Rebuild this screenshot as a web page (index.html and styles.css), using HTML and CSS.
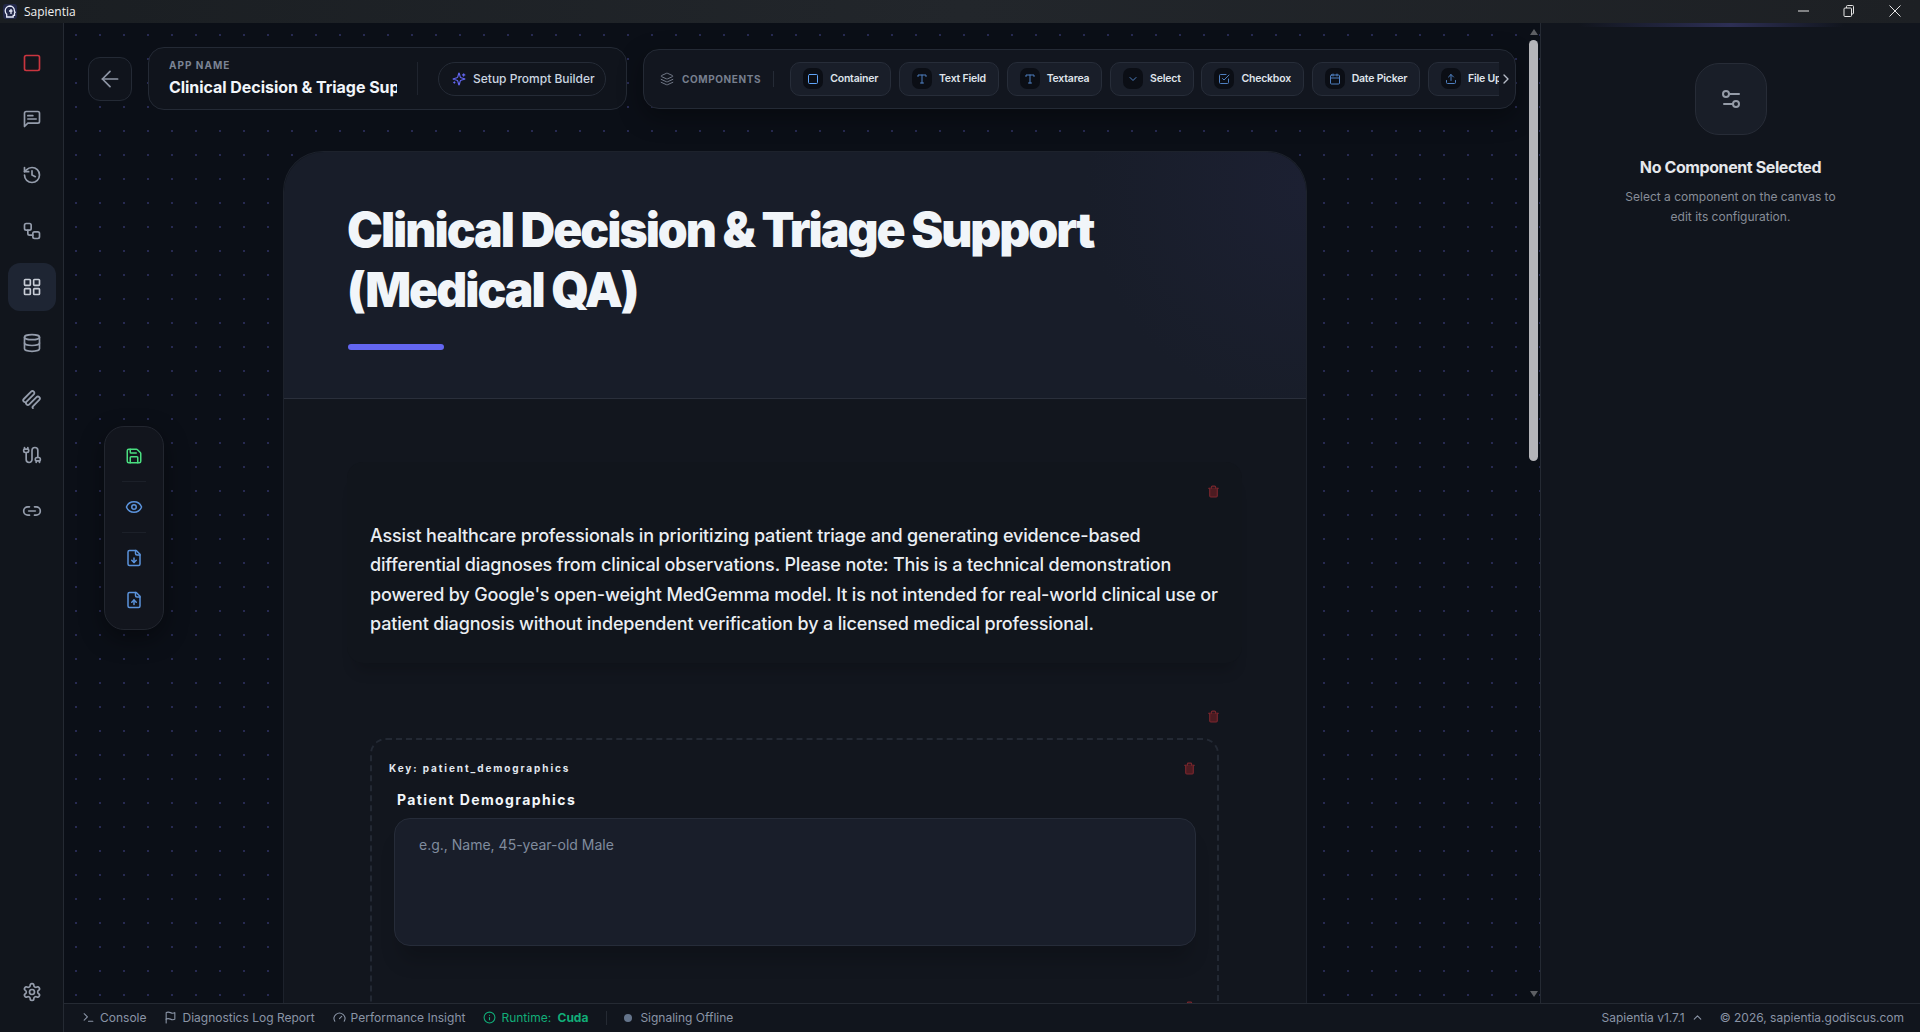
FILE: index.html
```html
<!DOCTYPE html>
<html lang="en">
<head>
    <meta charset="UTF-8">
    <title>Sapientia</title>
    <link rel="stylesheet" href="styles.css">
</head>
<body>
    <svg class="sprite" xmlns="http://www.w3.org/2000/svg">
        <symbol id="i-square" viewBox="0 0 24 24"><rect x="3" y="3" width="18" height="18" rx="2"/></symbol>
        <symbol id="i-chat" viewBox="0 0 24 24"><path d="M21 15a2 2 0 0 1-2 2H7l-4 4V5a2 2 0 0 1 2-2h14a2 2 0 0 1 2 2z"/><path d="M13 8H7"/><path d="M17 12H7"/></symbol>
        <symbol id="i-history" viewBox="0 0 24 24"><path d="M3 12a9 9 0 1 0 9-9 9.75 9.75 0 0 0-6.74 2.74L3 8"/><path d="M3 3v5h5"/><path d="M12 7v5l4 2"/></symbol>
        <symbol id="i-workflow" viewBox="0 0 24 24"><rect x="3" y="3" width="8" height="8" rx="2"/><path d="M7 11v4a2 2 0 0 0 2 2h4"/><rect x="13" y="13" width="8" height="8" rx="2"/></symbol>
        <symbol id="i-grid" viewBox="0 0 24 24"><rect x="3" y="3" width="7" height="7" rx="1"/><rect x="14" y="3" width="7" height="7" rx="1"/><rect x="14" y="14" width="7" height="7" rx="1"/><rect x="3" y="14" width="7" height="7" rx="1"/></symbol>
        <symbol id="i-database" viewBox="0 0 24 24"><ellipse cx="12" cy="5" rx="9" ry="3"/><path d="M3 5V19A9 3 0 0 0 21 19V5"/><path d="M3 12A9 3 0 0 0 21 12"/></symbol>
        <symbol id="i-coil" viewBox="1 2 22 22"><path d="M6 16a2.100 2.100 0 0 1-3-3L11 5a2.100 2.100 0 0 1 3 3L6 16a2.100 2.100 0 0 0 3 3l8-8a2.100 2.100 0 0 1 3 3l-7 7q-1 1 0 2"/></symbol>
        <symbol id="i-cable" viewBox="0 0 24 24"><path d="M17 21v-2a1 1 0 0 1-1-1v-1a2 2 0 0 1 2-2h2a2 2 0 0 1 2 2v1a1 1 0 0 1-1 1"/><path d="M19 15V6.5a1 1 0 0 0-7 0v11a1 1 0 0 1-7 0V9"/><path d="M21 21v-2h-4"/><path d="M3 5h4V3"/><path d="M7 5a1 1 0 0 1 1 1v1a2 2 0 0 1-2 2H4a2 2 0 0 1-2-2V6a1 1 0 0 1 1-1V3"/></symbol>
        <symbol id="i-link" viewBox="0 0 24 24"><path d="M9 17H7A5 5 0 0 1 7 7h2"/><path d="M15 7h2a5 5 0 1 1 0 10h-2"/><path d="M8 12h8"/></symbol>
        <symbol id="i-settings" viewBox="0 0 24 24"><path d="M12.22 2h-.44a2 2 0 0 0-2 2v.18a2 2 0 0 1-1 1.73l-.43.25a2 2 0 0 1-2 0l-.15-.08a2 2 0 0 0-2.73.73l-.22.38a2 2 0 0 0 .73 2.73l.15.1a2 2 0 0 1 1 1.72v.51a2 2 0 0 1-1 1.74l-.15.09a2 2 0 0 0-.73 2.73l.22.38a2 2 0 0 0 2.73.73l.15-.08a2 2 0 0 1 2 0l.43.25a2 2 0 0 1 1 1.73V20a2 2 0 0 0 2 2h.44a2 2 0 0 0 2-2v-.18a2 2 0 0 1 1-1.73l.43-.25a2 2 0 0 1 2 0l.15.08a2 2 0 0 0 2.73-.73l.22-.39a2 2 0 0 0-.73-2.73l-.15-.08a2 2 0 0 1-1-1.74v-.5a2 2 0 0 1 1-1.74l.15-.09a2 2 0 0 0 .73-2.73l-.22-.38a2 2 0 0 0-2.73-.73l-.15.08a2 2 0 0 1-2 0l-.43-.25a2 2 0 0 1-1-1.73V4a2 2 0 0 0-2-2z"/><circle cx="12" cy="12" r="3"/></symbol>
        <symbol id="i-back" viewBox="0 0 24 24"><path d="m12 19-7-7 7-7"/><path d="M19 12H5"/></symbol>
        <symbol id="i-sparkles" viewBox="0 0 24 24"><path d="M9.937 15.5A2 2 0 0 0 8.5 14.063l-6.135-1.582a.5.5 0 0 1 0-.962L8.5 9.936A2 2 0 0 0 9.937 8.5l1.582-6.135a.5.5 0 0 1 .963 0L14.063 8.5A2 2 0 0 0 15.5 9.937l6.135 1.581a.5.5 0 0 1 0 .964L15.5 14.063a2 2 0 0 0-1.437 1.437l-1.582 6.135a.5.5 0 0 1-.963 0z"/><path d="M20 3v4"/><path d="M22 5h-4"/><path d="M4 17v2"/><path d="M5 18H3"/></symbol>
        <symbol id="i-layers" viewBox="0 0 24 24"><path d="m12.83 2.18a2 2 0 0 0-1.66 0L2.6 6.08a1 1 0 0 0 0 1.83l8.58 3.91a2 2 0 0 0 1.66 0l8.58-3.9a1 1 0 0 0 0-1.83Z"/><path d="m22 17.65-9.17 4.16a2 2 0 0 1-1.66 0L2 17.65"/><path d="m22 12.65-9.17 4.16a2 2 0 0 1-1.66 0L2 12.65"/></symbol>
        <symbol id="i-type" viewBox="0 0 24 24"><path d="M4 7V4h16v3"/><path d="M9 20h6"/><path d="M12 4v16"/></symbol>
        <symbol id="i-chevron-down" viewBox="0 0 24 24"><path d="m6 9 6 6 6-6"/></symbol>
        <symbol id="i-chevron-right" viewBox="0 0 24 24"><path d="m9 18 6-6-6-6"/></symbol>
        <symbol id="i-chevron-up" viewBox="0 0 24 24"><path d="m18 15-6-6-6 6"/></symbol>
        <symbol id="i-check" viewBox="0 0 24 24"><path d="M9 11l3 3L22 4"/><path d="M21 12v7a2 2 0 0 1-2 2H5a2 2 0 0 1-2-2V5a2 2 0 0 1 2-2h11"/></symbol>
        <symbol id="i-calendar" viewBox="0 0 24 24"><path d="M8 2v4"/><path d="M16 2v4"/><rect x="3" y="4" width="18" height="18" rx="2"/><path d="M3 10h18"/></symbol>
        <symbol id="i-upload" viewBox="0 0 24 24"><path d="M21 15v4a2 2 0 0 1-2 2H5a2 2 0 0 1-2-2v-4"/><path d="M17 8l-5-5-5 5"/><path d="M12 3v12"/></symbol>
        <symbol id="i-sliders" viewBox="0 0 24 24"><path d="M20 7h-9"/><path d="M14 17H5"/><circle cx="17" cy="17" r="3"/><circle cx="7" cy="7" r="3"/></symbol>
        <symbol id="i-save" viewBox="0 0 24 24"><path d="M15.2 3a2 2 0 0 1 1.4.6l3.8 3.8a2 2 0 0 1 .6 1.4V19a2 2 0 0 1-2 2H5a2 2 0 0 1-2-2V5a2 2 0 0 1 2-2z"/><path d="M17 21v-7a1 1 0 0 0-1-1H8a1 1 0 0 0-1 1v7"/><path d="M7 3v4a1 1 0 0 0 1 1h7"/></symbol>
        <symbol id="i-eye" viewBox="0 0 24 24"><path d="M2.062 12.348a1 1 0 0 1 0-.696 10.75 10.75 0 0 1 19.876 0 1 1 0 0 1 0 .696 10.75 10.75 0 0 1-19.876 0"/><circle cx="12" cy="12" r="3"/></symbol>
        <symbol id="i-file-down" viewBox="0 0 24 24"><path d="M15 2H6a2 2 0 0 0-2 2v16a2 2 0 0 0 2 2h12a2 2 0 0 0 2-2V7Z"/><path d="M14 2v4a2 2 0 0 0 2 2h4"/><path d="M12 18v-6"/><path d="m9 15 3 3 3-3"/></symbol>
        <symbol id="i-file-up" viewBox="0 0 24 24"><path d="M15 2H6a2 2 0 0 0-2 2v16a2 2 0 0 0 2 2h12a2 2 0 0 0 2-2V7Z"/><path d="M14 2v4a2 2 0 0 0 2 2h4"/><path d="M12 12v6"/><path d="m15 15-3-3-3 3"/></symbol>
        <symbol id="i-trash" viewBox="0 0 24 24"><path d="M3 6h18"/><path class="trash-body" d="M19 6v14c0 1-1 2-2 2H7c-1 0-2-1-2-2V6"/><path d="M8 6V4c0-1 1-2 2-2h4c1 0 2 1 2 2v2"/></symbol>
        <symbol id="i-terminal" viewBox="0 0 24 24"><path d="M4 17l6-6-6-6"/><path d="M12 19h8"/></symbol>
        <symbol id="i-flag" viewBox="0 0 24 24"><path d="M4 15s1-1 4-1 5 2 8 2 4-1 4-1V3s-1 1-4 1-5-2-8-2-4 1-4 1z"/><path d="M4 22v-7"/></symbol>
        <symbol id="i-gauge" viewBox="0 0 24 24"><path d="m12 14 4-4"/><path d="M3.34 19a10 10 0 1 1 17.32 0"/></symbol>
        <symbol id="i-info" viewBox="0 0 24 24"><circle cx="12" cy="12" r="10"/><path d="M12 16v-4"/><path d="M12 8h.01"/></symbol>
    </svg>

    <div class="app">
        <header class="titlebar">
            <span class="app-logo">
                <svg viewBox="0 0 14 14"><path d="M7 1.500a4.800 4.800 0 0 0-4.800 4.800c0 1.700.8 2.800 1.500 3.500v2.700h6.500v-1.700h1.300V8.500l.6-.4-.7-1.800A4.700 4.700 0 0 0 7 1.500z"/><path d="M8 4.500v5M6 6.500h3.500"/></svg>
            </span>
            <span class="app-title">Sapientia</span>
            <div class="window-controls">
                <svg class="win-min" viewBox="0 0 12 12"><path d="M0 6h11"/></svg>
                <svg class="win-max" viewBox="0 0 12 12"><rect x="1" y="3" width="7.500" height="8.500" rx="1"/><path d="M3.500 3V1.500a1 1 0 0 1 1-1h5a1 1 0 0 1 1 1v6.500a1 1 0 0 1-1 1h-1"/></svg>
                <svg class="win-close" viewBox="0 0 12 12"><path d="M.5.500l11 11M11.500.500l-11 11"/></svg>
            </div>
        </header>

        <div class="workspace">
            <nav class="sidebar">
                <a class="nav-item nav-red"><svg class="icon"><use href="#i-square"/></svg></a>
                <a class="nav-item"><svg class="icon"><use href="#i-chat"/></svg></a>
                <a class="nav-item"><svg class="icon"><use href="#i-history"/></svg></a>
                <a class="nav-item"><svg class="icon"><use href="#i-workflow"/></svg></a>
                <a class="nav-item active"><svg class="icon"><use href="#i-grid"/></svg></a>
                <a class="nav-item"><svg class="icon"><use href="#i-database"/></svg></a>
                <a class="nav-item"><svg class="icon"><use href="#i-coil"/></svg></a>
                <a class="nav-item"><svg class="icon"><use href="#i-cable"/></svg></a>
                <a class="nav-item"><svg class="icon"><use href="#i-link"/></svg></a>
                <a class="nav-item nav-bottom"><svg class="icon"><use href="#i-settings"/></svg></a>
            </nav>

            <div class="main">
                <div class="panes">
                    <section class="canvas">
                        <div class="canvas-view">
                            <div class="toolbar-row">
                                <button class="back-btn"><svg class="icon"><use href="#i-back"/></svg></button>
                                <div class="name-card">
                                    <div class="name-field">
                                        <span class="name-label">APP NAME</span>
                                        <span class="name-value">Clinical Decision &amp; Triage Support (Medical QA)</span>
                                    </div>
                                    <span class="name-sep"></span>
                                    <button class="prompt-btn"><svg class="icon"><use href="#i-sparkles"/></svg>Setup Prompt Builder</button>
                                </div>
                                <div class="components-bar">
                                    <div class="components-head">
                                        <svg class="icon"><use href="#i-layers"/></svg>
                                        <span>COMPONENTS</span>
                                    </div>
                                    <span class="components-sep"></span>
                                    <div class="components-list">
                                        <button class="comp-btn"><span class="comp-icon bright"><svg class="icon"><use href="#i-square"/></svg></span>Container</button>
                                        <button class="comp-btn"><span class="comp-icon"><svg class="icon"><use href="#i-type"/></svg></span>Text Field</button>
                                        <button class="comp-btn"><span class="comp-icon"><svg class="icon"><use href="#i-type"/></svg></span>Textarea</button>
                                        <button class="comp-btn"><span class="comp-icon"><svg class="icon"><use href="#i-chevron-down"/></svg></span>Select</button>
                                        <button class="comp-btn"><span class="comp-icon"><svg class="icon"><use href="#i-check"/></svg></span>Checkbox</button>
                                        <button class="comp-btn"><span class="comp-icon"><svg class="icon"><use href="#i-calendar"/></svg></span>Date Picker</button>
                                        <button class="comp-btn"><span class="comp-icon"><svg class="icon"><use href="#i-upload"/></svg></span>File Upload</button>
                                    </div>
                                    <svg class="icon components-more"><use href="#i-chevron-right"/></svg>
                                </div>
                            </div>

                            <article class="page-card">
                                <div class="page-header">
                                    <h1>Clinical Decision &amp; Triage Support (Medical QA)</h1>
                                    <div class="accent-bar"></div>
                                </div>
                                <div class="page-body">
                                    <div class="block block-text">
                                        <svg class="icon trash"><use href="#i-trash"/></svg>
                                        <p>Assist healthcare professionals in prioritizing patient triage and generating evidence-based differential diagnoses from clinical observations. Please note: This is a technical demonstration powered by Google's open-weight MedGemma model. It is not intended for real-world clinical use or patient diagnosis without independent verification by a licensed medical professional.</p>
                                    </div>
                                    <div class="block block-group">
                                        <svg class="icon trash"><use href="#i-trash"/></svg>
                                        <div class="group">
                                            <div class="field">
                                                <svg class="icon trash"><use href="#i-trash"/></svg>
                                                <div class="field-key">Key: patient_demographics</div>
                                                <label class="field-label">Patient Demographics</label>
                                                <div class="textarea">e.g., Name, 45-year-old Male</div>
                                            </div>
                                            <div class="field field-next">
                                                <svg class="icon trash"><use href="#i-trash"/></svg>
                                            </div>
                                        </div>
                                    </div>
                                </div>
                            </article>

                            <div class="float-tools">
                                <button class="tool green"><svg class="icon"><use href="#i-save"/></svg></button>
                                <span class="tool-sep"></span>
                                <button class="tool"><svg class="icon"><use href="#i-eye"/></svg></button>
                                <span class="tool-sep"></span>
                                <button class="tool"><svg class="icon"><use href="#i-file-down"/></svg></button>
                                <button class="tool"><svg class="icon"><use href="#i-file-up"/></svg></button>
                            </div>
                        </div>
                        <div class="scrollbar">
                            <span class="arrow-up"></span>
                            <div class="scroll-track"><div class="scroll-thumb"></div></div>
                            <span class="arrow-down"></span>
                        </div>
                    </section>

                    <aside class="inspector">
                        <div class="inspector-glow"></div>
                        <div class="inspector-icon"><svg class="icon"><use href="#i-sliders"/></svg></div>
                        <h3>No Component Selected</h3>
                        <p>Select a component on the canvas to<br>edit its configuration.</p>
                    </aside>
                </div>

                <footer class="statusbar">
                    <span class="status-item"><svg class="icon"><use href="#i-terminal"/></svg>Console</span>
                    <span class="status-item"><svg class="icon"><use href="#i-flag"/></svg>Diagnostics Log Report</span>
                    <span class="status-item"><svg class="icon"><use href="#i-gauge"/></svg>Performance Insight</span>
                    <span class="status-item runtime"><svg class="icon"><use href="#i-info"/></svg>Runtime: <b>Cuda</b></span>
                    <span class="status-sep"></span>
                    <span class="status-item signal"><span class="status-dot"></span>Signaling Offline</span>
                    <span class="status-right">Sapientia v1.7.1<svg class="icon"><use href="#i-chevron-up"/></svg></span>
                    <span class="status-copy">© 2026, sapientia.godiscus.com</span>
                </footer>
            </div>
        </div>
    </div>
</body>
</html>
```

FILE: styles.css
```css
* {
    box-sizing: border-box;
}
html, body {
    height: 100%;
    margin: 0;
}
body {
    font-family: 'Inter', 'Liberation Sans', sans-serif;
    background: #0b0f17;
    color: #e5e7eb;
    overflow: hidden;
}
button {
    font-family: inherit;
    cursor: pointer;
}
.sprite {
    display: none;
}
.icon {
    fill: none;
    stroke: currentColor;
    stroke-width: 2;
    stroke-linecap: round;
    stroke-linejoin: round;
    flex-shrink: 0;
}
.app {
    display: flex;
    flex-direction: column;
    height: 100vh;
}

/* title bar */
.titlebar {
    display: flex;
    align-items: center;
    height: 23px;
    flex-shrink: 0;
    padding-left: 3px;
    background: linear-gradient(to right, #1a1e22, #22262b 50%, #1d2024);
}
.app-logo {
    display: flex;
    width: 14px;
    height: 15px;
    margin-right: 7px;
    background: #23294a;
    border-radius: 3px;
}
.app-logo svg {
    fill: none;
    stroke: #e6eafa;
    stroke-width: 1.300;
}
.app-title {
    font-family: 'Open Sans', sans-serif;
    font-size: 12px;
    color: #f0f0f0;
}
.window-controls {
    display: flex;
    align-items: center;
    margin-left: auto;
    height: 100%;
}
.window-controls svg {
    fill: none;
    stroke: #e4e4e4;
    stroke-width: 1;
    width: 12px;
    height: 12px;
    margin-bottom: 2px;
}
.win-min {
    margin-right: 33px;
}
.win-max {
    margin-right: 34px;
}
.win-close {
    margin-right: 19px;
}

.workspace {
    display: flex;
    flex: 1;
    min-height: 0;
}

/* left nav */
.sidebar {
    display: flex;
    flex-direction: column;
    align-items: center;
    width: 64px;
    flex-shrink: 0;
    padding-top: 16px;
    background: #11151c;
    border-right: 1px solid #252a33;
}
.nav-item {
    display: flex;
    align-items: center;
    justify-content: center;
    width: 48px;
    height: 48px;
    margin-bottom: 8px;
    border-radius: 12px;
    color: #959dac;
}
.nav-item .icon {
    width: 20px;
    height: 20px;
}
.nav-item.active {
    background: #1e2533;
    color: #c8cdd6;
}
.nav-red {
    color: #c9353f;
}
.nav-bottom {
    margin-top: auto;
    margin-bottom: 16px;
}

.main {
    display: flex;
    flex-direction: column;
    flex: 1;
    min-width: 0;
}
.panes {
    display: flex;
    flex: 1;
    min-height: 0;
}

/* canvas */
.canvas {
    display: flex;
    flex: 1;
    min-width: 0;
    background-color: #0b0f17;
    background-image: radial-gradient(circle, #272a52 1px, transparent 1.2px);
    background-size: 24px 24px;
}
.canvas-view {
    position: relative;
    flex: 1;
    min-width: 0;
    overflow: hidden;
}
.toolbar-row {
    display: flex;
    align-items: center;
    gap: 16px;
    padding: 24px 11px 0 24px;
}
.back-btn {
    display: flex;
    align-items: center;
    justify-content: center;
    width: 44px;
    height: 44px;
    flex-shrink: 0;
    background: #10141c;
    border: 1px solid #242a35;
    border-radius: 12px;
    color: #8e96a5;
}
.back-btn .icon {
    width: 26px;
    height: 26px;
    stroke-width: 1.600;
}
.name-card {
    display: flex;
    align-items: center;
    width: 479px;
    height: 63px;
    flex-shrink: 0;
    padding: 0 20px;
    background: #10141c;
    border: 1px solid #242a35;
    border-radius: 16px;
}
.name-field {
    display: flex;
    flex-direction: column;
    width: 228px;
    flex-shrink: 0;
    padding-bottom: 2px;
    overflow: hidden;
}
.name-label {
    font-size: 10px;
    font-weight: 700;
    letter-spacing: 1px;
    color: #7b8494;
}
.name-value {
    margin-top: 6px;
    font-size: 16px;
    font-weight: 700;
    letter-spacing: -0.05px;
    color: #f1f5f9;
    white-space: nowrap;
    overflow: hidden;
}
.name-sep {
    width: 1px;
    height: 33px;
    margin: 0 20px;
    flex-shrink: 0;
    background: #1f242e;
}
.prompt-btn {
    display: flex;
    align-items: center;
    gap: 7px;
    height: 34px;
    flex-shrink: 0;
    padding: 0 10px 0 13px;
    background: #11151d;
    border: 1px solid #252b36;
    border-radius: 17px;
    font-size: 12px;
    font-weight: 500;
    color: #cbd5e1;
    white-space: nowrap;
}
.prompt-btn .icon {
    width: 14px;
    height: 14px;
    color: #6366f1;
}
.components-bar {
    position: relative;
    display: flex;
    align-items: center;
    flex: 1;
    min-width: 0;
    height: 60px;
    padding-left: 16px;
    background: #12161f;
    border: 1px solid #242a35;
    border-radius: 16px;
    box-shadow: 0 8px 24px rgba(0, 0, 0, .35);
}
.components-head {
    display: flex;
    align-items: center;
    gap: 8px;
    flex-shrink: 0;
    font-size: 10px;
    font-weight: 700;
    letter-spacing: .6px;
    color: #777f8e;
}
.components-head .icon {
    width: 14px;
    height: 14px;
    stroke-width: 1.600;
}
.components-sep {
    width: 1px;
    height: 16px;
    margin: 0 16px 0 12px;
    flex-shrink: 0;
    background: #252b36;
}
.components-list {
    display: flex;
    gap: 7.700px;
    width: 709px;
    flex-shrink: 0;
    overflow: hidden;
}
.comp-btn {
    display: flex;
    align-items: center;
    gap: 7px;
    height: 34px;
    flex-shrink: 0;
    padding: 0 12px;
    background: #191e29;
    border: 1px solid #272d39;
    border-radius: 10px;
    font-size: 10.5px;
    font-weight: 600;
    letter-spacing: -0.2px;
    color: #dfe3ea;
    white-space: nowrap;
}
.comp-icon {
    display: flex;
    align-items: center;
    justify-content: center;
    width: 20px;
    height: 21px;
    background: #0b0e15;
    border-radius: 7px;
    color: #4e7fc0;
}
.comp-icon.bright {
    color: #60a5fa;
}
.comp-icon .icon {
    width: 12px;
    height: 12px;
}
.components-more {
    position: absolute;
    right: 1px;
    top: 21px;
    width: 16px;
    height: 16px;
    color: #b6bcc7;
}

/* page being edited */
.page-card {
    width: 1024px;
    margin: 41px 0 0 219px;
    background: #12161e;
    border: 1px solid #1d222c;
    border-bottom: none;
    border-radius: 40px 40px 0 0;
}
.page-header {
    height: 247px;
    padding: 48px 63px 0;
    background: radial-gradient(circle at 100% 15%, #1c2032, transparent 220px), #181d29;
    border-bottom: 1px solid #2a2f3b;
    border-radius: 40px 40px 0 0;
}
.page-header h1 {
    margin: 0;
    max-width: 800px;
    font-size: 48px;
    line-height: 60px;
    font-weight: 900;
    letter-spacing: -2px;
    color: #f1f5f9;
}
.accent-bar {
    width: 96px;
    height: 6px;
    margin: 24px 0 0 1px;
    background: #6366f1;
    border-radius: 3px;
}
.page-body {
    display: flex;
    flex-direction: column;
    gap: 30px;
    padding: 63px 64px 0 63px;
}
.block {
    position: relative;
    border-radius: 16px;
}
.block-text {
    padding: 59px 24px 25px 23px;
    background: #11151c;
    box-shadow: 0 16px 14px -8px rgba(0, 0, 0, .16);
}
.block-text p {
    margin: 0;
    font-size: 18px;
    line-height: 29.25px;
    font-weight: 500;
    letter-spacing: -0.16px;
    color: #eaeef3;
}
.block-group {
    padding: 45px 23px 0 23px;
}
.trash {
    position: absolute;
    top: 23px;
    right: 22px;
    width: 13px;
    height: 13px;
    color: #7c272e;
}
.block-group > .trash {
    top: 17px;
}
.trash-body {
    fill: #4c1b21;
}
.group {
    padding: 0 21px 40px 22px;
    border: 2px dashed #232934;
    border-radius: 16px;
}
.field {
    position: relative;
}
.group > .field > .trash {
    top: 2px;
    right: 0;
}
.field-key {
    margin: 20px 0 0 -5px;
    font-size: 10px;
    line-height: 16px;
    font-weight: 700;
    letter-spacing: 1.900px;
    color: #e2e8f0;
}
.field-label {
    display: block;
    margin: 14px 0 8px 3px;
    font-size: 14px;
    line-height: 20px;
    font-weight: 700;
    letter-spacing: 1.400px;
    color: #f1f5f9;
}
.textarea {
    height: 128px;
    padding: 16px 24px;
    background: #191e2a;
    border: 1px solid #262c39;
    border-radius: 16px;
    font-size: 14px;
    line-height: 20px;
    color: #808c9e;
    box-shadow: 0 20px 20px -6px rgba(0, 0, 0, .18);
}
.field-next {
    height: 60px;
    margin-top: 55px;
}
.group > .field-next > .trash {
    top: 0;
}

/* floating save / preview tools */
.float-tools {
    position: absolute;
    left: 40px;
    top: 403px;
    display: flex;
    flex-direction: column;
    align-items: center;
    width: 60px;
    height: 204px;
    padding-top: 8px;
    background: #12151d;
    border: 1px solid #22262f;
    border-radius: 20px;
    box-shadow: 0 8px 24px rgba(0, 0, 0, .4);
}
.tool {
    display: flex;
    align-items: center;
    justify-content: center;
    width: 40px;
    height: 42px;
    padding: 0;
    background: none;
    border: none;
    color: #5b93dc;
}
.tool .icon {
    width: 18px;
    height: 18px;
}
.tool.green {
    color: #4ade80;
}
.tool-sep {
    width: 24px;
    height: 1px;
    margin: 4px 0 4px;
    background: #1c2029;
}

/* custom scrollbar */
.scrollbar {
    display: flex;
    flex-direction: column;
    align-items: center;
    width: 13px;
    flex-shrink: 0;
    padding: 6px 0;
}
.scroll-track {
    flex: 1;
    width: 9px;
    padding-top: 5px;
}
.scroll-thumb {
    height: 421px;
    background: #b5b5b9;
    border-radius: 5px;
}
.arrow-up, .arrow-down {
    width: 0;
    height: 0;
    border-left: 4.500px solid transparent;
    border-right: 4.500px solid transparent;
}
.arrow-up {
    border-bottom: 6px solid #5d5f64;
}
.arrow-down {
    border-top: 6px solid #5d5f64;
}

/* right inspector */
.inspector {
    position: relative;
    display: flex;
    flex-direction: column;
    align-items: center;
    width: 380px;
    flex-shrink: 0;
    padding-top: 40px;
    background: #11151d;
    border-left: 1px solid #252a33;
}
.inspector-glow {
    position: absolute;
    top: 0;
    left: 0;
    right: 0;
    height: 4px;
    background: linear-gradient(to right, transparent 10%, #2d2f55 50%, transparent 80%);
}
.inspector-icon {
    display: flex;
    align-items: center;
    justify-content: center;
    width: 72px;
    height: 72px;
    background: #191e28;
    border: 1px solid #272c37;
    border-radius: 24px;
    color: #959ca8;
}
.inspector-icon .icon {
    width: 24px;
    height: 24px;
}
.inspector h3 {
    margin: 22px 0 0;
    font-size: 16px;
    line-height: 20px;
    font-weight: 700;
    letter-spacing: -0.400px;
    color: #e5e7eb;
}
.inspector p {
    margin: 10px 0 0;
    font-size: 12px;
    line-height: 20px;
    text-align: center;
    color: #878d98;
}

/* status bar */
.statusbar {
    display: flex;
    align-items: center;
    height: 29px;
    flex-shrink: 0;
    padding: 0 16px 1px 18px;
    background: #11151d;
    border-top: 1px solid #252a33;
    font-size: 12px;
    color: #8a94a6;
}
.status-item {
    display: flex;
    align-items: center;
    gap: 5px;
    margin-right: 18px;
    white-space: pre;
}
.status-item .icon {
    width: 13px;
    height: 13px;
}
.runtime {
    color: #11ad78;
}
.runtime b {
    font-weight: 700;
    margin-left: -2px;
}
.status-sep {
    width: 1px;
    height: 14px;
    margin-right: 17px;
    background: #252a33;
}
.signal {
    gap: 8px;
}
.status-dot {
    width: 8px;
    height: 8px;
    border-radius: 50%;
    background: #64748b;
}
.status-right {
    display: flex;
    align-items: center;
    gap: 6px;
    margin-left: auto;
    margin-right: 16px;
}
.status-right .icon {
    width: 13px;
    height: 13px;
}
```
